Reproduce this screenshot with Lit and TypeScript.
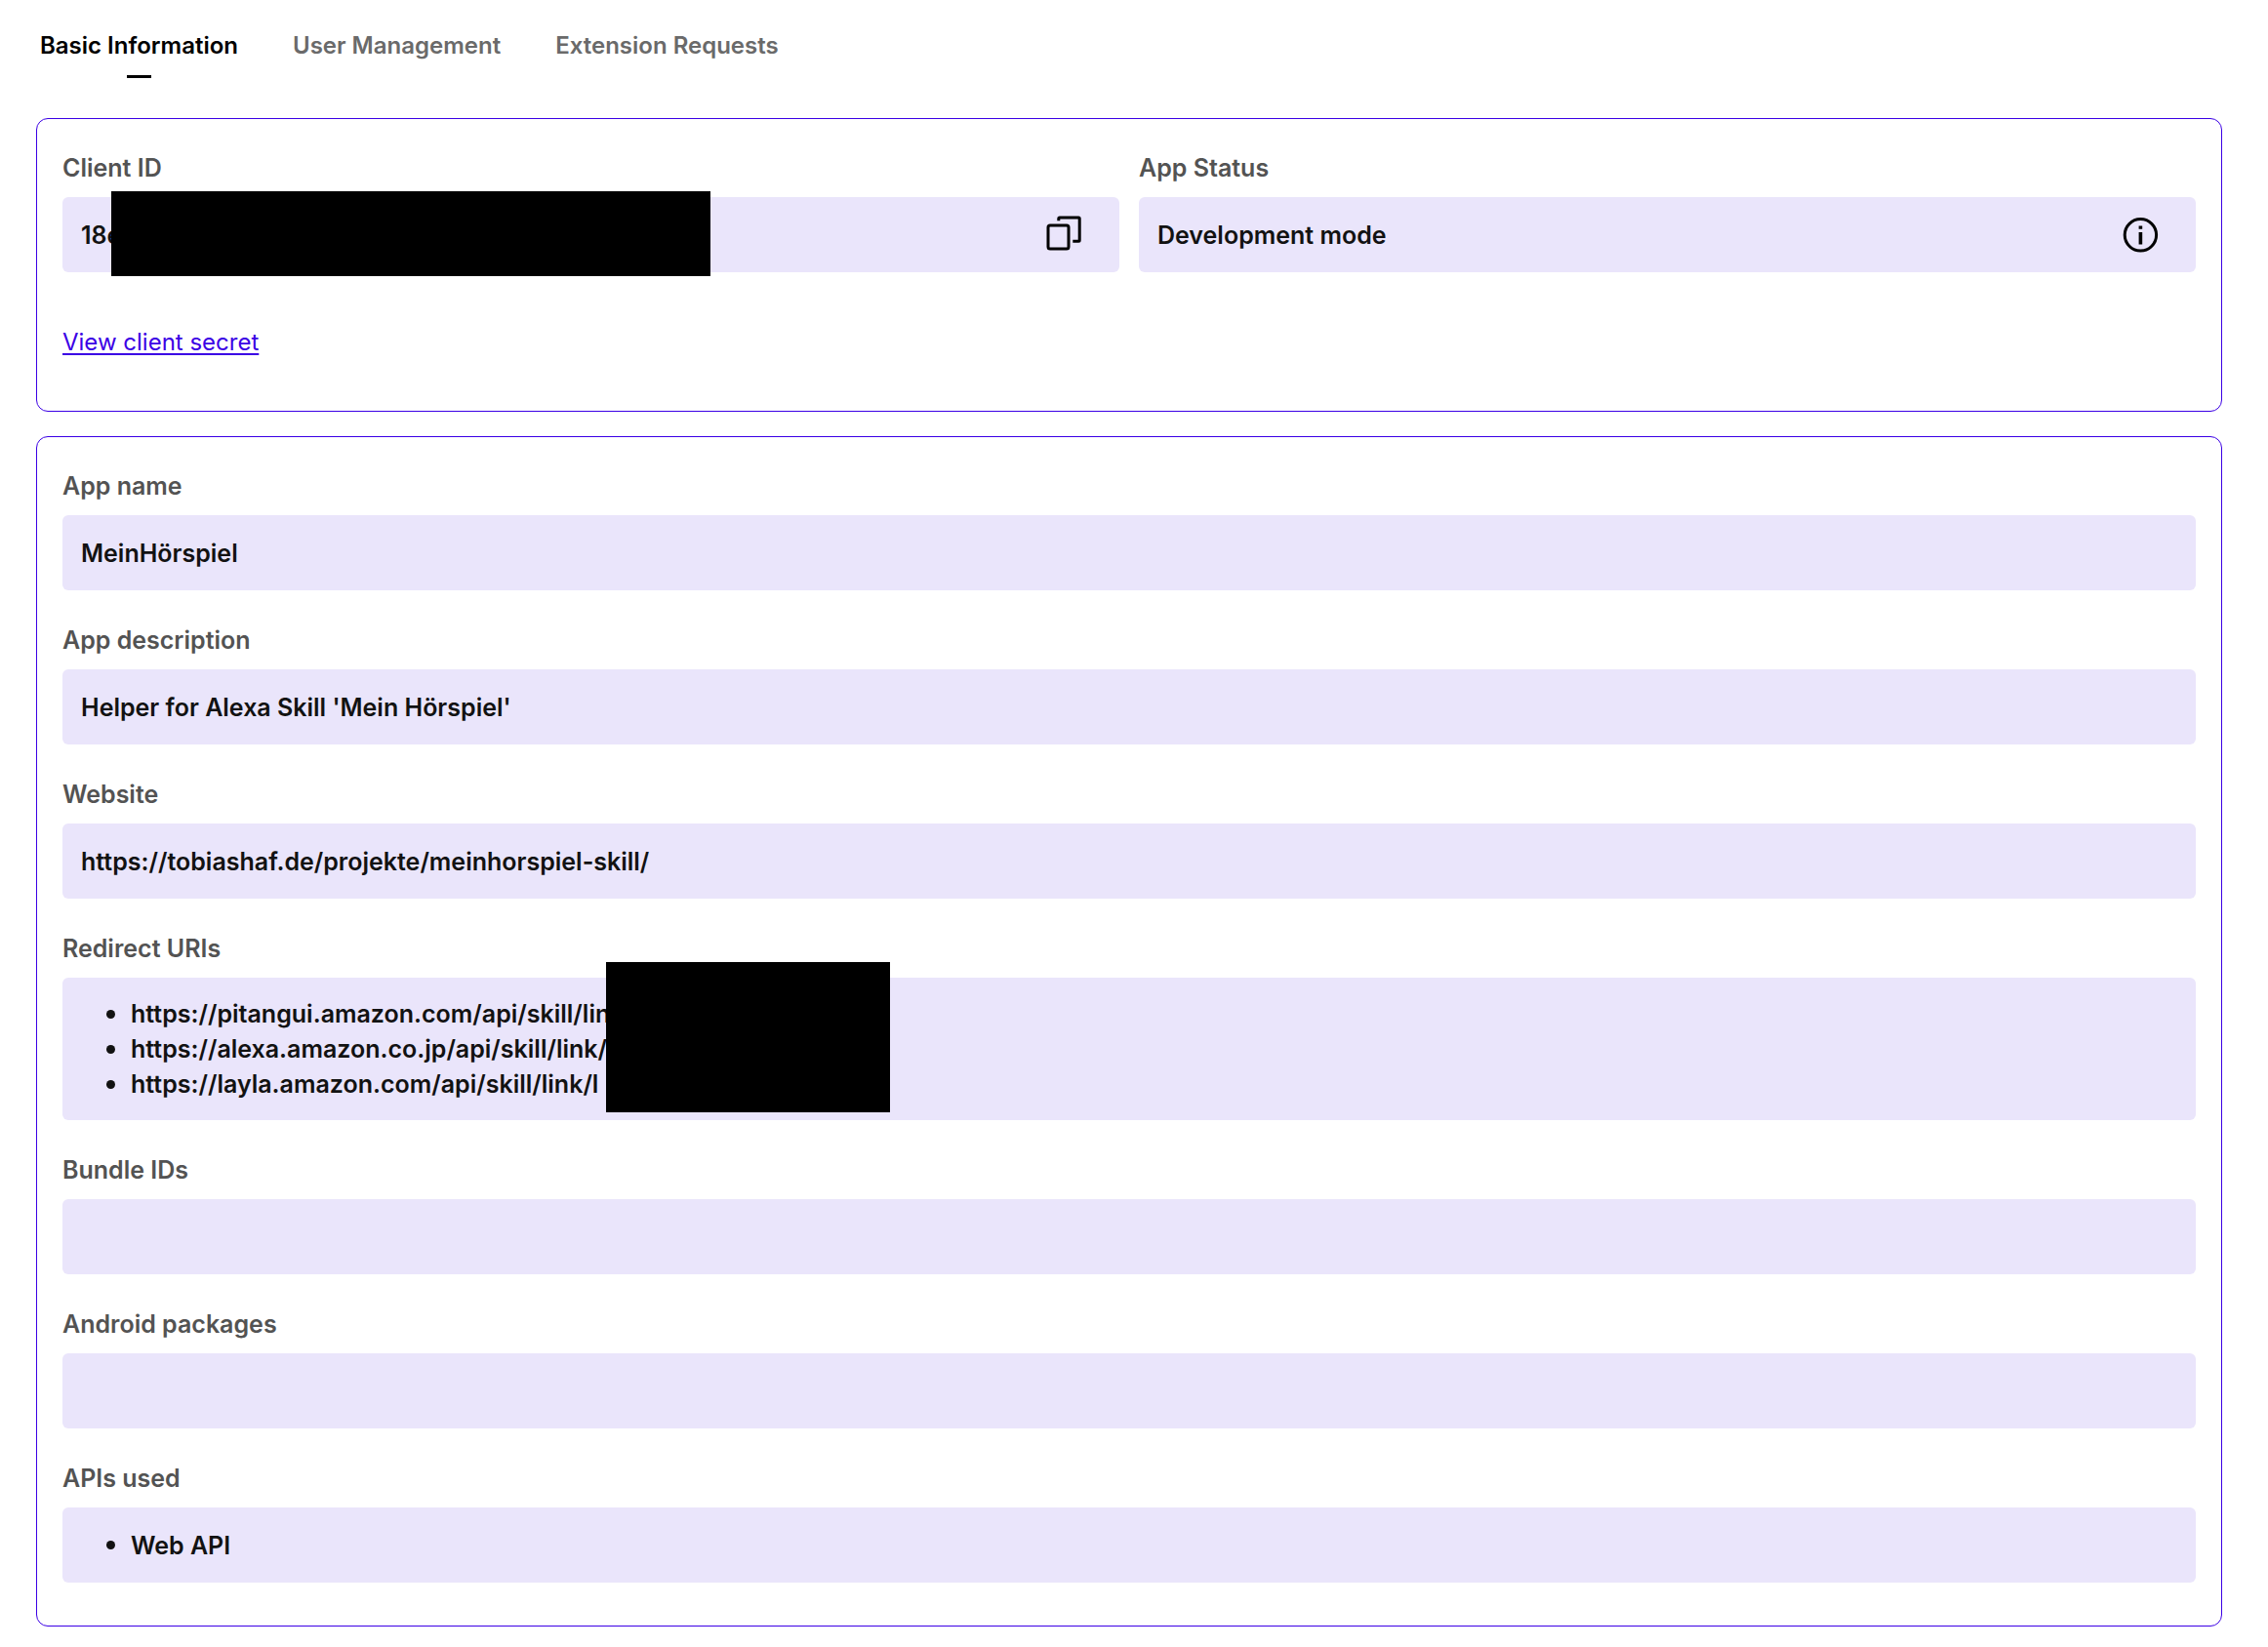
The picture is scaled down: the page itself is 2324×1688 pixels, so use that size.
import { LitElement, html, css, svg, nothing } from "lit";
import type { TemplateResult } from "lit";
import { customElement, property } from "lit/decorators.js";

const copyIcon = svg`
  <rect x="4" y="10" width="21" height="24" rx="2" />
  <path d="M14.8 5.2V3a1 1 0 0 1 1-1h19.4a1 1 0 0 1 1 1v22.3a1 1 0 0 1-1 1h-5.9" />`;

const infoIcon = svg`
  <circle cx="20.4" cy="19.8" r="16.2" />
  <path d="M20.4 10.5v3.2M20.4 17v12.4" stroke-width="3.6" />`;

/** A caption with a tinted read-only box below it. */
@customElement("info-field")
export class InfoField extends LitElement {
  static styles = css`
    :host {
      display: block;
      min-width: 0;
    }
    .label {
      margin: 0 0 12px;
      color: #535353;
      font-size: 25px;
      font-weight: 600;
      line-height: 36px;
    }
    .box {
      position: relative;
      box-sizing: border-box;
      display: flex;
      align-items: center;
      justify-content: space-between;
      min-height: 77px;
      padding: 19px 37px 19px 19px;
      border-radius: 6px;
      background: #eae5fb;
      color: #121212;
      font-size: 25px;
      font-weight: 600;
      line-height: 36px;
    }
  `;

  @property() label = "";

  render() {
    return html`
      <p class="label">${this.label}</p>
      <div class="box"><slot></slot></div>
    `;
  }
}

@customElement("app-root")
export class AppRoot extends LitElement {
  static styles = css`
    :host {
      display: block;
      min-height: 100vh;
      background: #fff;
      font-family: Inter, "Liberation Sans", sans-serif;
    }
    .tabs {
      display: flex;
      gap: 56px;
      padding: 29px 41px 41px;
    }
    .tab {
      color: #6a6a6a;
      font-size: 24px;
      font-weight: 600;
      line-height: 36px;
      text-decoration: none;
    }
    .tab::after {
      content: "";
      display: block;
      width: 25px;
      height: 3px;
      margin: 12px auto 0;
    }
    .tab.active {
      color: #000;
    }
    .tab.active::after {
      background: #000;
    }
    .cards {
      display: grid;
      gap: 25px;
      padding: 0 47px 20px 37px;
    }
    .card {
      display: grid;
      gap: 33px;
      padding: 32px 26px 44px;
      border: 1px solid #3b00e5;
      border-radius: 12px;
    }
    .card.credentials {
      gap: 54px;
      padding-bottom: 52px;
    }
    .pair {
      display: grid;
      grid-template-columns: 1fr 1fr;
      gap: 20px;
    }
    .secret {
      justify-self: start;
      color: #3b00e5;
      font-size: 24px;
      line-height: 36px;
      text-decoration-thickness: 2px;
      text-underline-offset: 3px;
      text-decoration-skip-ink: none;
    }
    .icon-button {
      display: block;
      flex: none;
      margin: -2px 0 -2px auto;
      padding: 0;
      border: 0;
      background: none;
      color: #000;
      cursor: pointer;
    }
    .icon {
      display: block;
      width: 40px;
      height: 40px;
      fill: none;
      stroke: currentColor;
      stroke-width: 3;
    }
    .list {
      margin: 0;
      padding: 0 0 0 26px;
      list-style: none;
    }
    .item {
      display: flex;
      align-items: center;
      gap: 16px;
    }
    .item::before {
      content: "";
      width: 9px;
      height: 9px;
      border-radius: 50%;
      background: currentColor;
    }
    .redaction {
      position: absolute;
      background: #000;
    }
    .redaction.id {
      top: -6px;
      left: 50px;
      width: 614px;
      height: 87px;
    }
    .redaction.links {
      top: -16px;
      left: 557px;
      width: 291px;
      height: 154px;
    }
  `;

  private tabs = ["Basic Information", "User Management", "Extension Requests"];

  private list(items: string[]) {
    return html`<ul class="list">
      ${items.map((item) => html`<li class="item">${item}</li>`)}
    </ul>`;
  }

  private iconButton(label: string, icon: TemplateResult<2>) {
    return html`<button class="icon-button" type="button" aria-label=${label}>
      <svg class="icon" viewBox="0 0 40 40" aria-hidden="true">${icon}</svg>
    </button>`;
  }

  render() {
    return html`
      <nav class="tabs">
        ${this.tabs.map(
          (tab, i) => html`<a
            class="tab ${i === 0 ? "active" : ""}"
            href="#"
            aria-current=${i === 0 ? "page" : nothing}
            >${tab}</a
          >`
        )}
      </nav>
      <main class="cards">
        <section class="card credentials">
          <div class="pair">
            <info-field label="Client ID">
              <span>18e</span>
              <span class="redaction id"></span>
              ${this.iconButton("Copy", copyIcon)}
            </info-field>
            <info-field label="App Status">
              <span>Development mode</span>
              ${this.iconButton("Info", infoIcon)}
            </info-field>
          </div>
          <a class="secret" href="#">View client secret</a>
        </section>
        <section class="card">
          <info-field label="App name">MeinHörspiel</info-field>
          <info-field label="App description">Helper for Alexa Skill 'Mein Hörspiel'</info-field>
          <info-field label="Website">https://tobiashaf.de/projekte/meinhorspiel-skill/</info-field>
          <info-field label="Redirect URIs">
            ${this.list([
              "https://pitangui.amazon.com/api/skill/link/",
              "https://alexa.amazon.co.jp/api/skill/link/",
              "https://layla.amazon.com/api/skill/link/l",
            ])}
            <span class="redaction links"></span>
          </info-field>
          <info-field label="Bundle IDs"></info-field>
          <info-field label="Android packages"></info-field>
          <info-field label="APIs used">${this.list(["Web API"])}</info-field>
        </section>
      </main>
    `;
  }
}
